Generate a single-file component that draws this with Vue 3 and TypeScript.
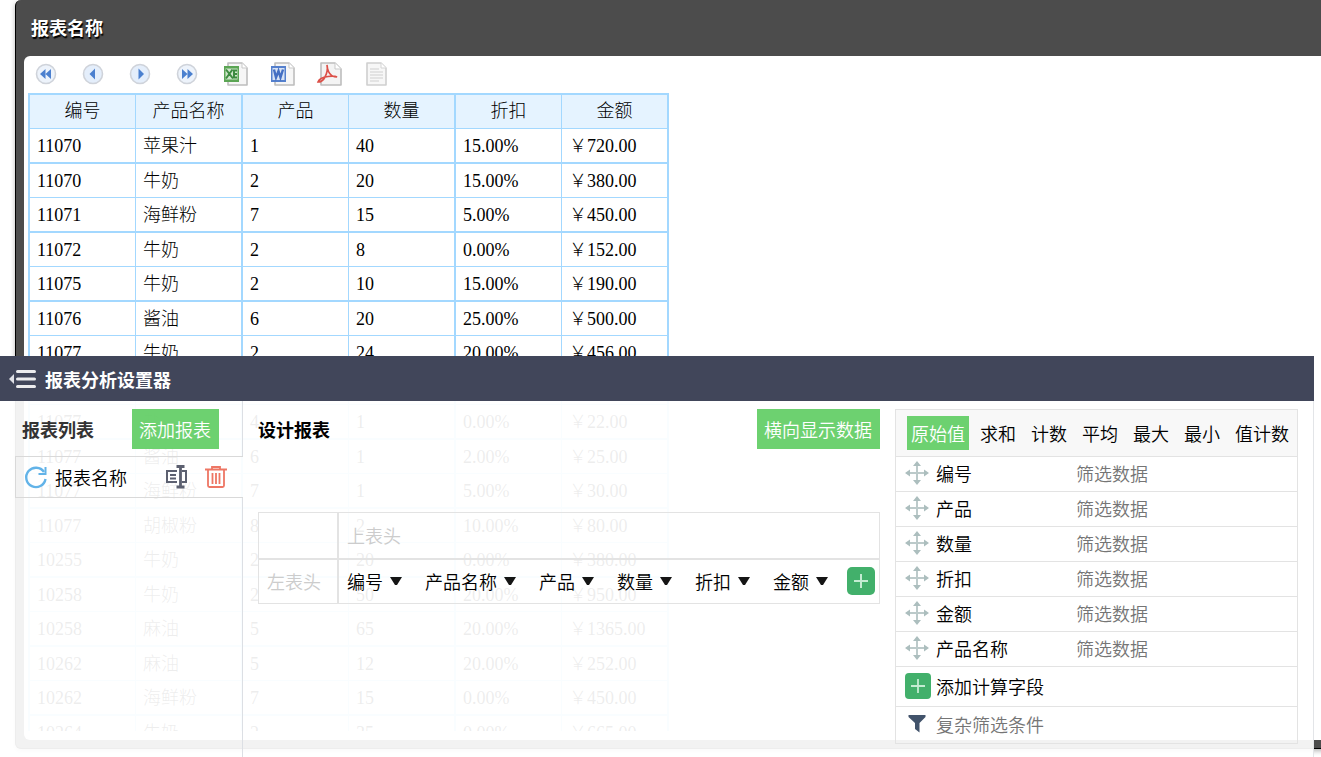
<script setup lang="ts">
import { ref } from 'vue'

type Row = string[]

const headers: Row = ['编号', '产品名称', '产品', '数量', '折扣', '金额']
const rows: Row[] = [
  ['11070', '苹果汁', '1', '40', '15.00%', '￥720.00'],
  ['11070', '牛奶', '2', '20', '15.00%', '￥380.00'],
  ['11071', '海鲜粉', '7', '15', '5.00%', '￥450.00'],
  ['11072', '牛奶', '2', '8', '0.00%', '￥152.00'],
  ['11075', '牛奶', '2', '10', '15.00%', '￥190.00'],
  ['11076', '酱油', '6', '20', '25.00%', '￥500.00'],
  ['11077', '牛奶', '2', '24', '20.00%', '￥456.00'],
  ['', '', '', '', '', ''],
  ['11077', '盐', '4', '1', '0.00%', '￥22.00'],
  ['11077', '酱油', '6', '1', '2.00%', '￥25.00'],
  ['11077', '海鲜粉', '7', '1', '5.00%', '￥30.00'],
  ['11077', '胡椒粉', '8', '2', '10.00%', '￥80.00'],
  ['10255', '牛奶', '2', '20', '0.00%', '￥380.00'],
  ['10258', '牛奶', '2', '50', '20.00%', '￥950.00'],
  ['10258', '麻油', '5', '65', '20.00%', '￥1365.00'],
  ['10262', '麻油', '5', '12', '20.00%', '￥252.00'],
  ['10262', '海鲜粉', '7', '15', '0.00%', '￥450.00'],
  ['10264', '牛奶', '2', '35', '0.00%', '￥665.00'],
]

const modes: string[] = ['原始值', '求和', '计数', '平均', '最大', '最小', '值计数']
const activeMode = ref('原始值')
const fields: string[] = ['编号', '产品', '数量', '折扣', '金额', '产品名称']
</script>

<template>
  <div class="page">
    <main class="frame">
      <h1 class="frame-title">报表名称</h1>
      <section class="viewer">
        <div class="toolbar">
          <button type="button" aria-label="首页">
            <svg width="24" height="24" viewBox="0 0 24 24"><circle cx="12" cy="12" r="9.5" fill="#edf3fb" stroke="#cfd3da" stroke-width="1.6" /><path d="M11.5 7v10L6 12zM17 7v10l-5.5-5z" fill="#4b80cf" /></svg>
          </button>
          <button type="button" aria-label="上一页">
            <svg width="24" height="24" viewBox="0 0 24 24"><circle cx="12" cy="12" r="9.5" fill="#e4eefb" stroke="#cfd3da" stroke-width="1.6" /><path d="M14 6.500v11L8.500 12z" fill="#4b80cf" /></svg>
          </button>
          <button type="button" aria-label="下一页">
            <svg width="24" height="24" viewBox="0 0 24 24"><circle cx="12" cy="12" r="9.5" fill="#e4eefb" stroke="#cfd3da" stroke-width="1.6" /><path d="M10.500 6.500v11L16 12z" fill="#4b80cf" /></svg>
          </button>
          <button type="button" aria-label="末页">
            <svg width="24" height="24" viewBox="0 0 24 24"><circle cx="12" cy="12" r="9.5" fill="#edf3fb" stroke="#cfd3da" stroke-width="1.6" /><path d="M7 7v10l5.500-5zM12.500 7v10l5.500-5z" fill="#4b80cf" /></svg>
          </button>
          <button type="button" aria-label="导出 Excel">
            <svg width="26" height="26" viewBox="0 0 26 26">
              <path d="M5 2h14l5 5v17H5z" fill="#f6f6f6" stroke="#bdbdbd" stroke-width="1.6" stroke-linejoin="round" /><path d="M19 2v5h5" fill="#fff" stroke="#c9c9c9" />
              <rect x="1" y="5" width="15" height="16" fill="#5ba554" /><rect x="2.500" y="7.500" width="12" height="11" fill="#d0e6cb" />
              <path d="M3 8.500l7 9M9.500 8.500L3 17.500M14 9.500h-3v7h3M10 13h4" stroke="#3d8b40" stroke-width="2" fill="none" />
            </svg>
          </button>
          <button type="button" aria-label="导出 Word">
            <svg width="26" height="26" viewBox="0 0 26 26">
              <path d="M5 2h14l5 5v17H5z" fill="#f6f6f6" stroke="#bdbdbd" stroke-width="1.6" stroke-linejoin="round" /><path d="M19 2v5h5" fill="#fff" stroke="#c9c9c9" />
              <rect x="1" y="5" width="15" height="16" fill="#5580cd" /><rect x="2.500" y="7" width="12" height="12" fill="#d8e3f5" />
              <path d="M4 8.500l2 8 2.500-6.500 2 6.500 2.500-8" stroke="#446fc3" stroke-width="2.400" fill="none" />
            </svg>
          </button>
          <button type="button" aria-label="导出 PDF">
            <svg width="26" height="26" viewBox="0 0 26 26">
              <path d="M4 2h14l6 6v16H4z" fill="#f4f4f4" stroke="#bdbdbd" stroke-width="1.6" stroke-linejoin="round" /><path d="M18 2v6h6" fill="#fff" stroke="#c9c9c9" />
              <path d="M10 4c1 4 0 8-2 12s-5 5-7 5c1-3 6-5 10-5.500s7-.5 9 .500c-4 0-7-2-8.500-5.500S10 6 10 4z" fill="none" stroke="#dc5048" stroke-width="1.700" />
            </svg>
          </button>
          <button type="button" aria-label="导出文本">
            <svg width="26" height="26" viewBox="0 0 26 26">
              <path d="M3 2h14l5 5v17H3z" fill="#f7f7f7" stroke="#cfcfcf" stroke-width="1.6" stroke-linejoin="round" /><path d="M17 2v5h5" fill="#fff" stroke="#d4d4d4" />
              <path d="M6 8h9M6 11h13M6 14h13M6 17h13M6 20h9" stroke="#cfcfcf" stroke-width="1.2" />
            </svg>
          </button>
        </div>
        <div class="table-view">
          <table class="report">
            <thead>
              <tr><th v-for="h in headers" :key="h" scope="col">{{ h }}</th></tr>
            </thead>
            <tbody>
              <tr v-for="(r, i) in rows" :key="i">
                <td v-for="(c, j) in r" :key="j">{{ c }}</td>
              </tr>
            </tbody>
          </table>
        </div>
      </section>
    </main>

    <section class="designer">
      <header class="designer-head">
        <button type="button" class="collapse" aria-label="收起">
          <svg width="28" height="24" viewBox="0 0 28 24"><path d="M4 7v10L-1 12z" fill="#dfe0e6" /><path d="M7.500 4.500h17M7.500 12h17M7.500 19.500h17" stroke="#fff" stroke-width="3" stroke-linecap="round" opacity=".9" /></svg>
        </button>
        <h2>报表分析设置器</h2>
      </header>

      <div class="designer-body">
        <aside class="list">
          <div class="list-head">
            <h3>报表列表</h3>
            <button type="button" class="green">添加报表</button>
          </div>
          <div class="list-item">
            <button type="button" aria-label="刷新">
              <svg width="24" height="24" viewBox="0 0 24 24"><path d="M20 7A9.700 9.700 0 1 0 21.500 14" fill="none" stroke="#62b3e8" stroke-width="2.400" /><path d="M21.500 2v7h-7" fill="none" stroke="#62b3e8" stroke-width="2" /></svg>
            </button>
            <span class="item-name">报表名称</span>
            <button type="button" aria-label="重命名">
              <svg width="24" height="24" viewBox="0 0 24 24" fill="none" stroke="#5c6070" stroke-width="2"><path d="M12 6H2v11h10M17 6h4v11h-4M5 10h6M5 13.500h6" /><path d="M15.500 2v20M11.500 1.500h8M11.500 22h8" stroke-width="2.800" /></svg>
            </button>
            <button type="button" class="trash" aria-label="删除">
              <svg width="22" height="24" viewBox="0 0 22 24" fill="none" stroke="#ee7664" stroke-width="1.8"><path d="M0 4.500h22M7 4V2h8v2M3 5v15.500q0 1.500 1.500 1.500h13q1.500 0 1.500-1.500V5M7.500 8v11M11 8v11M14.500 8v11" /></svg>
            </button>
          </div>
          <div class="list-rest"></div>
        </aside>

        <section class="design">
          <div class="design-head">
            <h3>设计报表</h3>
            <button type="button" class="green">横向显示数据</button>
          </div>
          <table class="layout">
            <tbody>
              <tr>
                <td class="corner"></td>
                <td class="hint">上表头</td>
              </tr>
              <tr>
                <td class="hint">左表头</td>
                <td>
                  <div class="columns">
                    <button v-for="h in headers" :key="h" type="button" class="column" aria-haspopup="menu">
                      {{ h }}
                      <svg width="12" height="8" viewBox="0 0 12 8"><path d="M0 0h12L7 8H5z" fill="#151515" /></svg>
                    </button>
                    <button type="button" class="add" aria-label="添加列">
                      <svg width="28" height="28" viewBox="0 0 28 28"><rect width="28" height="28" rx="5" fill="#42b06b" /><path d="M14 7v14M7 14h14" stroke="#c4ecd2" stroke-width="2" /></svg>
                    </button>
                  </div>
                </td>
              </tr>
            </tbody>
          </table>
        </section>

        <aside class="fields">
          <div class="modes">
            <button v-for="m in modes" :key="m" type="button" :class="{ on: m === activeMode }" @click="activeMode = m">{{ m }}</button>
          </div>
          <label v-for="f in fields" :key="f" class="field">
            <svg width="24" height="24" viewBox="0 0 24 24"><path d="M12 4v16M3 12h18" stroke="#bccaca" stroke-width="2" /><path d="M12 0l4 5H8zM12 24l4-5H8zM0 12l5-3.500v7zM24 12l-5-3.500v7z" fill="#acbebe" /></svg>
            <span>{{ f }}</span>
            <input type="text" placeholder="筛选数据" />
          </label>
          <button type="button" class="calc">
            <svg width="26" height="26" viewBox="0 0 26 26"><rect width="26" height="26" rx="4" fill="#42b06b" /><path d="M13 6v14M6 13h14" stroke="#c4ecd2" stroke-width="1.8" /></svg>
            添加计算字段
          </button>
          <label class="complex">
            <svg width="24" height="20" viewBox="0 0 24 20"><path d="M3.500 1h17v2l-6 6v9.500L10 15V9L3.500 3z" fill="#42536b" /></svg>
            <input type="text" placeholder="复杂筛选条件" aria-label="复杂筛选条件" />
          </label>
        </aside>
      </div>
    </section>
  </div>
</template>

<style>
body {
  margin: 0;
  background: #fff;
}
</style>

<style scoped>
* {
  box-sizing: border-box;
}
.page {
  position: relative;
  display: flex;
  height: 100vh;
  overflow: hidden;
  font: 350 18px/24px "Noto Sans CJK SC", sans-serif;
  color: #000;
}
button,
input {
  margin: 0;
  padding: 0;
  border: 0;
  background: none;
  font: inherit;
  color: inherit;
}
button {
  cursor: pointer;
}
svg {
  display: block;
  flex: none;
  overflow: visible;
}
h1,
h2,
h3 {
  margin: 0;
  font-size: 18px;
  line-height: 24px;
  font-weight: 700;
}
.frame {
  flex: 1;
  display: flex;
  flex-direction: column;
  margin: 0 -20px 8px 15px;
  padding: 0 8px 8px;
  border: 1px solid #000;
  border-top: 0;
  border-radius: 6px;
  background: #4c4c4c;
  box-shadow: 0 2px 5px rgba(0, 0, 0, 0.3);
}
.frame-title {
  padding: 15px 7px 17px;
  color: #fff;
  text-shadow: 1px 2px 1px #000;
}
.viewer {
  flex: 1;
  min-height: 0;
  display: flex;
  flex-direction: column;
  padding: 0 4px 9px;
  border-radius: 6px;
  background: #fff;
}
.toolbar {
  display: flex;
  align-items: center;
  height: 37px;
  padding: 0 0 1px 6px;
}
.toolbar button {
  width: 47px;
}
.toolbar button:nth-child(n + 5) {
  padding-left: 1px;
}
.table-view {
  flex: 1;
  min-height: 0;
  overflow: hidden;
}
.report {
  border-spacing: 0;
  border: solid #a3d8ff;
  border-width: 2px 0 0 2px;
  font-family: "Liberation Serif", "Noto Sans CJK SC", serif;
}
.report th,
.report td {
  width: 106px;
  height: 34px;
  padding: 0 7px;
  border: solid #a3d8ff;
  border-width: 0 1px 1px 0;
  line-height: 24px;
  font-weight: 300;
  text-align: left;
  white-space: nowrap;
}
.report th {
  padding-bottom: 2px;
  background: #e5f3ff;
  text-align: center;
}
.report th:nth-child(even),
.report td:nth-child(even) {
  width: 107px;
  border-right-width: 2px;
}
.report tbody tr:nth-child(odd) td {
  height: 35px;
  border-bottom-width: 2px;
}
.designer {
  position: absolute;
  left: 0;
  right: 7px;
  top: 356px;
  bottom: 0;
  display: flex;
  flex-direction: column;
  border-right: 1px solid #e3e5e8;
  background: rgba(255, 255, 255, 0.93);
}
.designer-head {
  display: flex;
  align-items: center;
  gap: 7px;
  height: 45px;
  margin-right: -1px;
  padding-left: 10px;
  background: #41465a;
  color: #fff;
}
.designer-body {
  flex: 1;
  display: flex;
  min-height: 0;
  padding: 0 15px;
}
.list {
  flex: none;
  display: flex;
  flex-direction: column;
  width: 228px;
}
.list-head {
  display: flex;
  align-items: center;
  justify-content: space-between;
  height: 55px;
  padding: 0 23px 0 7px;
  border-right: 1px solid #dcdfe4;
  color: #333;
}
.green {
  height: 40px;
  padding: 0 8px 0 7px;
  background: rgba(98, 206, 101, 0.93);
  color: #fff;
}
.list-item {
  display: flex;
  align-items: center;
  height: 42px;
  padding: 0 16px 0 8px;
  border: 1px solid #d9d9d9;
  border-right: 0;
}
.item-name {
  flex: 1;
  padding-left: 7px;
}
.trash {
  margin-left: 16px;
}
.list-rest {
  flex: 1;
  border-right: 1px solid #dcdfe4;
}
.design {
  flex: 1;
  padding: 8px 15px 0;
}
.design-head {
  display: flex;
  align-items: center;
  justify-content: space-between;
}
.layout {
  width: 100%;
  margin-top: 63px;
  table-layout: fixed;
  border-spacing: 0;
}
.layout td {
  height: 45px;
  padding: 0 4px 2px 8px;
  border: 1px solid #e3e3e3;
}
.layout tr:first-child td {
  height: 47px;
}
.layout td:first-child {
  width: 80px;
}
.layout .hint {
  color: #ccc;
  white-space: nowrap;
}
.columns {
  display: flex;
  align-items: center;
}
.column {
  display: flex;
  align-items: center;
  gap: 7px;
  white-space: nowrap;
}
.column + .column {
  margin-left: 23px;
}
.add {
  margin-left: auto;
}
.fields {
  flex: none;
  align-self: flex-start;
  width: 403px;
  margin-top: 8px;
  border: 1px solid #e3e3e3;
}
.modes {
  display: flex;
  align-items: center;
  justify-content: space-between;
  height: 46px;
  padding: 0 4px 0 11px;
  background: #f8f8f8;
}
.modes button {
  height: 34px;
  padding: 0 4px;
}
.modes .on {
  background: #6dd170;
  color: #fff;
}
.field,
.calc,
.complex {
  display: flex;
  align-items: center;
  width: 100%;
  height: 35px;
  padding: 0 0 2px 9px;
  border-top: 1px solid #e3e3e3;
  text-align: left;
}
.field span {
  width: 147px;
  padding-left: 7px;
}
.field span + input {
  flex: 1;
  min-width: 0;
}
.calc {
  gap: 5px;
  height: 40px;
}
.complex {
  gap: 7px;
  height: 37px;
}
.complex input {
  flex: 1;
  min-width: 0;
}
input::placeholder {
  color: #757575;
  opacity: 1;
}
</style>
